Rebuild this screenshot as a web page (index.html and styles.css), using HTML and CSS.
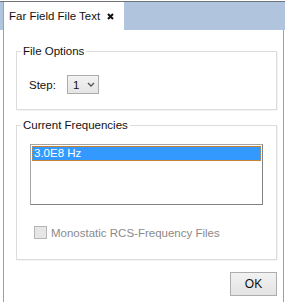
FILE: index.html
```html
<!DOCTYPE html>
<html lang="en">
<head>
    <meta charset="UTF-8">
    <title>Far Field File Text</title>
    <link rel="stylesheet" href="styles.css">
</head>
<body>

<div class="frame">
    <div class="tabbar">
        <div class="tab">
            <span class="tab-title">Far Field File Text</span>
            <svg class="tab-close" width="7" height="7" viewBox="0 0 7 7">
                <path d="M1 1 L6 6 M6 1 L1 6" stroke="#111" stroke-width="2"/>
            </svg>
        </div>
    </div>

    <div class="panel">
        <fieldset class="group group-options">
            <legend>File Options</legend>
            <div class="step-row">
                <span class="step-label">Step:</span>
                <div class="combo">
                    <span class="combo-value">1</span>
                    <svg class="combo-arrow" width="8" height="5" viewBox="0 0 8 5">
                        <path d="M1 1 L4 4 L7 1" fill="none" stroke="#555" stroke-width="1.4"/>
                    </svg>
                </div>
            </div>
        </fieldset>

        <fieldset class="group group-freq">
            <legend>Current Frequencies</legend>
            <div class="listbox">
                <div class="list-item selected">3.0E8 Hz</div>
            </div>
            <label class="check-row">
                <span class="checkbox"></span>
                <span class="check-label">Monostatic RCS-Frequency Files</span>
            </label>
        </fieldset>

        <div class="button-row">
            <button class="btn-ok">OK</button>
        </div>
    </div>
</div>

</body>
</html>
```

FILE: styles.css
```css
body {
    margin: 0;
    font-family: "Liberation Sans", Arial, sans-serif;
    font-size: 11px;
    color: #111111;
    background-color: #ffffff;
}

.frame {
    width: 285px;
    height: 302px;
    display: flex;
    flex-direction: column;
}

/* TAB BAR */
.tabbar {
    height: 28px;
    margin-top: 1px;
    border-top: 1px solid #6f747b;
    background-color: #b0c4de;
    display: flex;
    align-items: stretch;
}

.tab {
    width: 121px;
    margin-left: 3px;
    border-left: 1px solid #a0a0a0;
    background-color: #ffffff;
    display: flex;
    align-items: center;
    padding: 0 10px 0 5px;
    box-sizing: border-box;
}

.tab-title {
    font-size: 11.5px;
}

.tab-close {
    margin-left: auto;
}

/* PANEL */
.panel {
    flex: 1;
    margin-left: 3px;
    margin-right: 1px;
    border-left: 1px solid #a0a0a0;
    border-right: 1px solid #a0a0a0;
    padding: 15px 6px 0 12px;
    display: flex;
    flex-direction: column;
}

.group {
    margin: 0;
    padding: 0;
    border: 1px solid #dcdcdc;
    box-shadow: inset 1px 1px 0 #fff, 1px 1px 0 #f4f4f4;
    min-width: 0;
}

.group legend {
    padding: 0 2px;
    margin-left: 4px;
    font-size: 11.5px;
}

.group-options {
    height: 63px;
    flex-shrink: 0;
}

.step-row {
    display: flex;
    align-items: center;
    padding: 18px 0 0 12px;
}

.step-label {
    width: 38px;
    font-size: 11.5px;
}

.combo {
    width: 32px;
    height: 19px;
    border: 1px solid #acacac;
    background: linear-gradient(to bottom, #f2f2f2, #e5e5e5);
    display: flex;
    align-items: center;
    padding-left: 5px;
    box-sizing: border-box;
    font-size: 11.5px;
}

.combo-value {
    width: 14px;
}

.group-freq {
    margin-top: 9px;
    height: 139px;
    flex-shrink: 0;
}

.listbox {
    margin: 13px 13px 0 13px;
    height: 57px;
    border: 1px solid #a5a5a5;
    border-right-color: #828282;
    border-bottom-color: #828282;
    background-color: #ffffff;
    padding: 1px;
}

.list-item {
    height: 15px;
    line-height: 15px;
    padding-left: 2px;
    font-size: 11.5px;
}

.list-item.selected {
    background-color: #3399ff;
    color: #ffffff;
    outline: 1px dotted #d0883a;
    outline-offset: -1px;
}

.check-row {
    display: flex;
    align-items: center;
    margin: 21px 0 0 17px;
}

.checkbox {
    width: 11px;
    height: 11px;
    border: 1px solid #b5b5b5;
    background-color: #e6e6e6;
    margin-right: 4px;
}

.check-label {
    color: #8a8a8a;
    font-size: 11.5px;
}

.button-row {
    display: flex;
    justify-content: flex-end;
    padding-top: 12px;
}

.btn-ok {
    width: 47px;
    height: 24px;
    font-family: inherit;
    font-size: 12px;
    color: #111111;
    border: 1px solid #adadad;
    background: linear-gradient(to bottom, #f2f2f2, #e3e3e3);
    padding: 0;
}
```
